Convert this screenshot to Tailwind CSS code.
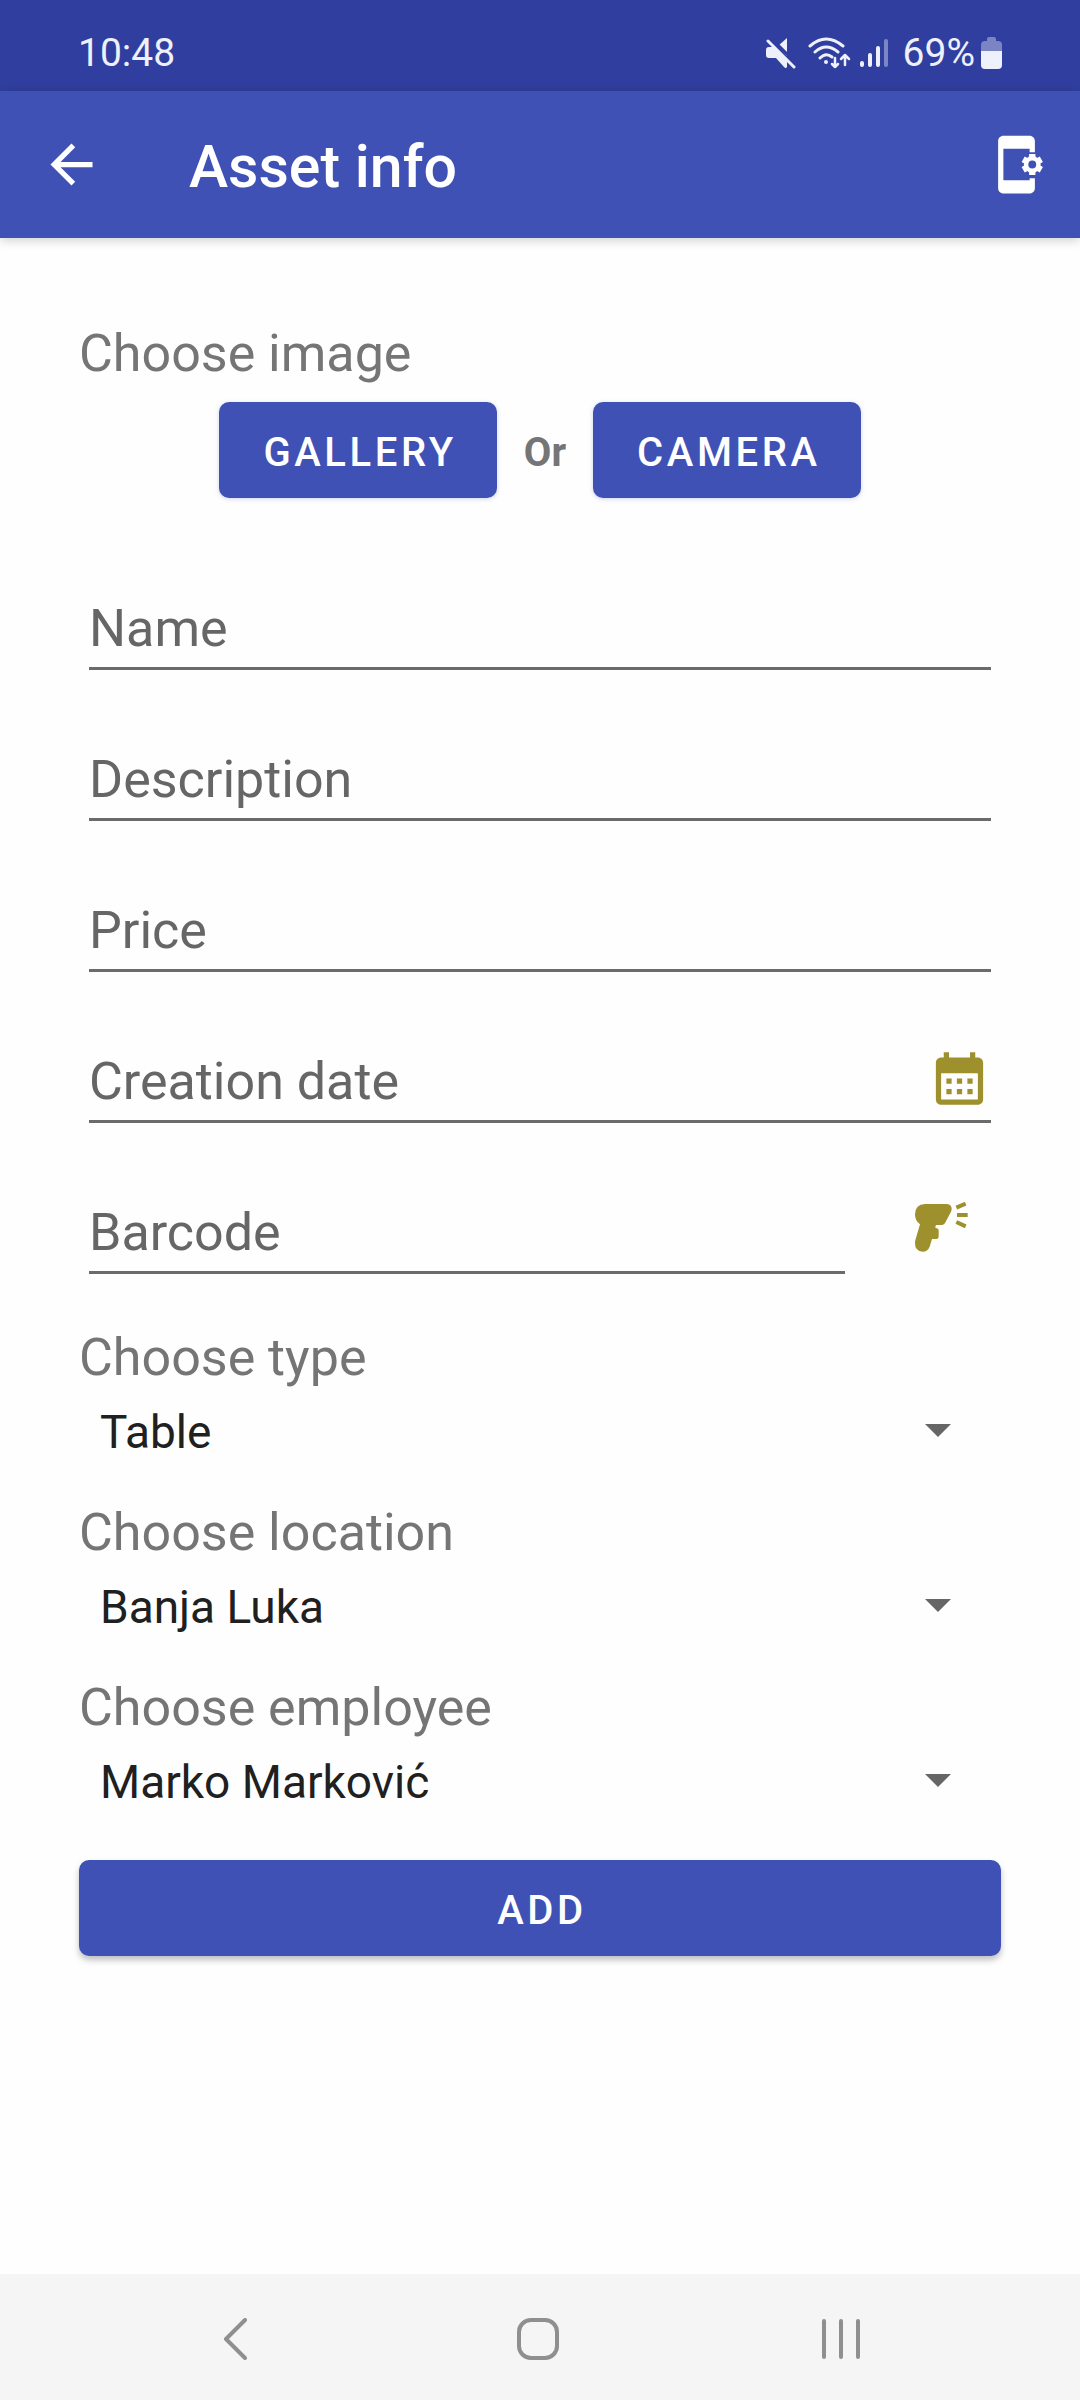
<!DOCTYPE html>
<html lang="en">
<head>
    <meta charset="UTF-8">
    <meta name="viewport" content="width=device-width, initial-scale=1.0">
    <title>Asset info</title>
    <script src="https://cdn.jsdelivr.net/npm/@tailwindcss/browser@4"></script>
</head>
<body class="bg-[#fefefe] font-[Roboto,sans-serif]">
    <div class="min-h-screen flex flex-col">
        <!-- Status Bar -->
        <div class="h-[91px] px-[78px] pt-[14px] flex items-center justify-between bg-[#303f9f] text-[#eef0fb] text-[39px] leading-[46px]">
            <span>10:48</span>
            <div class="flex items-center">
                <svg class="w-[31px] h-[32px] mr-[12px]" viewBox="0 0 31 32" fill="currentColor">
                    <path d="M22 1v18L13 9zM1 13q0-3 3-3h6l12 12v8q-1 2-3 0L11 21H4q-3 0-3-3z"/>
                    <path d="M6 1l26 26" stroke="#303f9f" stroke-width="3"/>
                    <path d="M3 4l26 26" stroke="currentColor" stroke-width="3" stroke-linecap="round"/>
                </svg>
                <svg class="w-[43px] h-[32px] mr-[9px]" viewBox="0 0 43 32" fill="none" stroke="currentColor" stroke-width="3" stroke-linecap="round" stroke-linejoin="round">
                    <path d="M2 9q16-14 33 0M7 15q11-10 23 0M12 21q6-6 12-1"/>
                    <circle cx="18" cy="25" r="2" fill="currentColor" stroke="none"/>
                    <path d="M27 21v9m-3-3l3 3 3-3M37 28v-9m-4 3l4-4 4 4" stroke-width="2.500"/>
                </svg>
                <svg class="w-[28px] h-[32px] mr-[15px]" viewBox="0 0 28 32" stroke="currentColor" stroke-width="4" stroke-linecap="round">
                    <path d="M2 26v2M10 18v10M18 11v17"/>
                    <path d="M26 4v24" opacity=".4"/>
                </svg>
                <span>69%</span>
                <svg class="w-[21px] h-[32px] ml-[6px]" viewBox="0 0 21 32" fill="currentColor">
                    <path d="M6 2q0-2 2-2h5q2 0 2 2v2h2q4 0 4 4v6H0V8q0-4 4-4h2z" opacity=".4"/>
                    <path d="M0 14h21v14q0 4-4 4H4q-4 0-4-4z"/>
                </svg>
            </div>
        </div>

        <!-- App Bar -->
        <header class="h-[147px] pl-[40px] pr-8 flex items-center bg-[#3f51b5] text-white shadow-[0_2px_10px_rgba(0,0,0,0.2)]">
            <button type="button" aria-label="Back">
                <svg class="w-[63px] h-[63px]" viewBox="0 0 24 24" fill="currentColor">
                    <path d="M20 11H7.83l5.59-5.59L12 4l-8 8 8 8 1.41-1.41L7.83 13H20v-2z"/>
                </svg>
            </button>
            <h1 class="flex-1 ml-[86px] pt-1 text-[59px] leading-[68px] font-medium">Asset info</h1>
            <button type="button" aria-label="Settings">
                <svg class="w-[63px] h-[63px]" viewBox="0 0 24 24" fill="currentColor">
                    <path d="M17 18H7V6h10v1.300h2V3c0-1.100-.9-2-2-2H7c-1.100 0-2 .9-2 2v18c0 1.100.9 2 2 2h10c1.100 0 2-.9 2-2v-3.800h-2z"/>
                    <circle cx="18" cy="12" r="3.200"/>
                    <path d="M18 8v8M14.540 10l6.920 4M14.540 14l6.920-4" stroke="currentColor" stroke-width="2.400"/>
                    <circle cx="18" cy="12" r="1.500" fill="#3f51b5"/>
                </svg>
            </button>
        </header>

        <!-- Asset Form -->
        <form class="px-[79px] pt-[86px]">
            <p class="text-[52px] leading-[60px] text-[#757575]">Choose image</p>
            <div class="mt-[18px] flex items-center justify-center gap-[27px]">
                <button type="button" class="h-24 pt-[6px] pl-[44px] pr-[40px] rounded-[10px] bg-[#3f51b5] text-white text-[40px] font-medium tracking-[0.09em] shadow-[0_1px_4px_rgba(63,81,181,0.25)]">GALLERY</button>
                <span class="pt-[6px] text-[40px] font-bold text-[#757575]">Or</span>
                <button type="button" class="h-24 pt-[6px] pl-[44px] pr-[40px] rounded-[10px] bg-[#3f51b5] text-white text-[40px] font-medium tracking-[0.09em] shadow-[0_1px_4px_rgba(63,81,181,0.25)]">CAMERA</button>
            </div>

            <div class="mt-[100px] mx-[10px] flex flex-col gap-[79px] text-[52px] leading-[60px]">
                <input type="text" aria-label="Name" placeholder="Name" class="w-full h-[72px] pb-[9px] border-b-3 border-[#6b6b6b] placeholder:text-[#666666] focus:outline-none">
                <input type="text" aria-label="Description" placeholder="Description" class="w-full h-[72px] pb-[9px] border-b-3 border-[#6b6b6b] placeholder:text-[#666666] focus:outline-none">
                <input type="text" aria-label="Price" placeholder="Price" class="w-full h-[72px] pb-[9px] border-b-3 border-[#6b6b6b] placeholder:text-[#666666] focus:outline-none">
                <div class="relative flex">
                    <input type="text" aria-label="Creation date" placeholder="Creation date" class="w-full h-[72px] pb-[9px] border-b-3 border-[#6b6b6b] placeholder:text-[#666666] focus:outline-none">
                    <button type="button" aria-label="Pick date" class="absolute right-0 -top-1 text-[#9e902d]">
                        <svg class="w-[63px] h-[63px]" viewBox="0 0 24 24" fill="currentColor">
                            <path d="M19 4h-1V2h-2v2H8V2H6v2H5c-1.110 0-2 .9-2 2v14a2 2 0 0 0 2 2h14c1.100 0 2-.9 2-2V6c0-1.100-.9-2-2-2zm0 16H5V10h14v10zM9 14H7v-2h2v2zm4 0h-2v-2h2v2zm4 0h-2v-2h2v2zm-8 4H7v-2h2v2zm4 0h-2v-2h2v2zm4 0h-2v-2h2v2z"/>
                        </svg>
                    </button>
                </div>
                <div class="flex items-start gap-[65px] pr-[18px]">
                    <input type="text" aria-label="Barcode" placeholder="Barcode" class="flex-1 min-w-0 h-[72px] pb-[9px] border-b-3 border-[#6b6b6b] placeholder:text-[#666666] focus:outline-none">
                    <button type="button" aria-label="Scan barcode" class="text-[#9e902d]">
                        <svg class="w-[63px] h-[54px]" viewBox="150 516 189 162" fill="currentColor">
                            <path d="M195 522h66q14 1 14 15 0 4-2 8l-18 34q-3 6-10 6h-17q-2 4-2 8 10 2 10 8v19q0 7-7 7h-13l-7 23q-6 15-21 15-23-1-23-25 0-5 1-9l14-48q-15-10-15-30 1-30 30-31z"/>
                            <path d="M289 533l28-12M291 555h32M289 576l28 13" stroke="currentColor" stroke-width="12"/>
                        </svg>
                    </button>
                </div>
            </div>

            <div class="mt-[54px] flex flex-col gap-[27px]">
                <div>
                    <label for="type" class="block text-[52px] leading-[60px] text-[#757575]">Choose type</label>
                    <div class="relative">
                        <select id="type" class="block w-full h-[88px] pl-[21px] appearance-none text-[46px] text-[#202020]">
                            <option>Table</option>
                        </select>
                        <svg class="absolute right-[50px] top-[36px] w-[26px] h-[13px] pointer-events-none" viewBox="0 0 26 13" fill="#666666"><path d="M0 0h26L13 13z"/></svg>
                    </div>
                </div>
                <div>
                    <label for="location" class="block text-[52px] leading-[60px] text-[#757575]">Choose location</label>
                    <div class="relative">
                        <select id="location" class="block w-full h-[88px] pl-[21px] appearance-none text-[46px] text-[#202020]">
                            <option>Banja Luka</option>
                        </select>
                        <svg class="absolute right-[50px] top-[36px] w-[26px] h-[13px] pointer-events-none" viewBox="0 0 26 13" fill="#666666"><path d="M0 0h26L13 13z"/></svg>
                    </div>
                </div>
                <div>
                    <label for="employee" class="block text-[52px] leading-[60px] text-[#757575]">Choose employee</label>
                    <div class="relative">
                        <select id="employee" class="block w-full h-[88px] pl-[21px] appearance-none text-[46px] text-[#202020]">
                            <option>Marko Marković</option>
                        </select>
                        <svg class="absolute right-[50px] top-[36px] w-[26px] h-[13px] pointer-events-none" viewBox="0 0 26 13" fill="#666666"><path d="M0 0h26L13 13z"/></svg>
                    </div>
                </div>
            </div>

            <button type="submit" class="mt-[34px] w-full h-24 pt-[6px] pl-1 rounded-[10px] bg-[#3f51b5] text-white text-[40px] font-medium tracking-[0.09em] shadow-[0_4px_6px_rgba(0,0,0,0.25)]">ADD</button>
        </form>

        <!-- Navigation Bar -->
        <nav class="mt-auto h-[126px] pl-[84px] pr-[88px] pt-1 grid grid-cols-3 items-center justify-items-center bg-[#f5f5f5] text-[#8f8f8f]">
            <button type="button" aria-label="Back">
                <svg class="w-[24px] h-[42px]" viewBox="0 0 24 42" fill="none" stroke="currentColor" stroke-width="4" stroke-linecap="round" stroke-linejoin="round"><path d="M22 2L3 21l19 19"/></svg>
            </button>
            <button type="button" aria-label="Home">
                <svg class="w-[42px] h-[42px]" viewBox="0 0 42 42" fill="none" stroke="currentColor" stroke-width="4"><rect x="2" y="2" width="38" height="38" rx="12"/></svg>
            </button>
            <button type="button" aria-label="Recents">
                <svg class="w-[38px] h-[42px]" viewBox="0 0 38 42" stroke="currentColor" stroke-width="4" stroke-linecap="round"><path d="M2 3v36M19 3v36M36 3v36"/></svg>
            </button>
        </nav>
    </div>
</body>
</html>
